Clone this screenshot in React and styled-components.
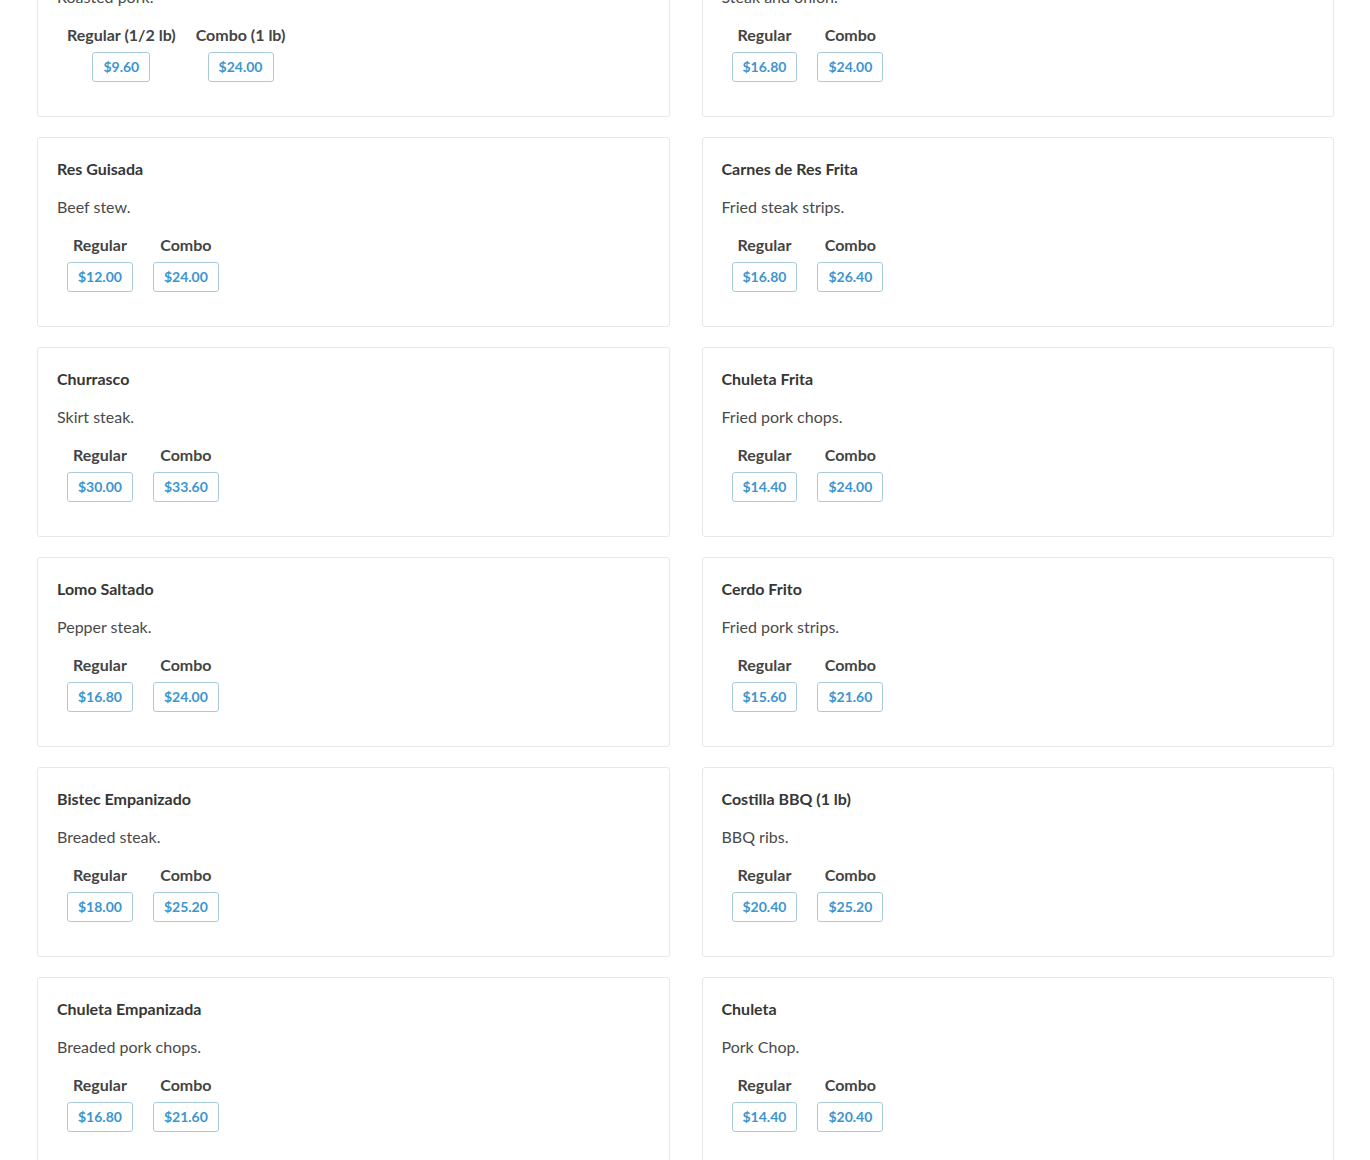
import React from 'react'
import styled, { createGlobalStyle } from 'styled-components'

const items = [
    {
        name: 'Pernil',
        desc: 'Roasted pork.',
        prices: [
            ['Regular (1/2 lb)', '$9.60'],
            ['Combo (1 lb)', '$24.00'],
        ],
    },
    {
        name: 'Bistec Encebollado',
        desc: 'Steak and onion.',
        prices: [
            ['Regular', '$16.80'],
            ['Combo', '$24.00'],
        ],
    },
    { name: 'Res Guisada', desc: 'Beef stew.', prices: [['Regular', '$12.00'], ['Combo', '$24.00']] },
    { name: 'Carnes de Res Frita', desc: 'Fried steak strips.', prices: [['Regular', '$16.80'], ['Combo', '$26.40']] },
    { name: 'Churrasco', desc: 'Skirt steak.', prices: [['Regular', '$30.00'], ['Combo', '$33.60']] },
    { name: 'Chuleta Frita', desc: 'Fried pork chops.', prices: [['Regular', '$14.40'], ['Combo', '$24.00']] },
    { name: 'Lomo Saltado', desc: 'Pepper steak.', prices: [['Regular', '$16.80'], ['Combo', '$24.00']] },
    { name: 'Cerdo Frito', desc: 'Fried pork strips.', prices: [['Regular', '$15.60'], ['Combo', '$21.60']] },
    { name: 'Bistec Empanizado', desc: 'Breaded steak.', prices: [['Regular', '$18.00'], ['Combo', '$25.20']] },
    { name: 'Costilla BBQ (1 lb)', desc: 'BBQ ribs.', prices: [['Regular', '$20.40'], ['Combo', '$25.20']] },
    { name: 'Chuleta Empanizada', desc: 'Breaded pork chops.', prices: [['Regular', '$16.80'], ['Combo', '$21.60']] },
    { name: 'Chuleta', desc: 'Pork Chop.', prices: [['Regular', '$14.40'], ['Combo', '$20.40']] },
]

export default function App() {
    return (
        <>
            <GlobalStyle />
            <Menu>
                {items.map((item) => (
                    <Card key={item.name}>
                        <Title>{item.name}</Title>
                        <Desc>{item.desc}</Desc>
                        <Prices>
                            {item.prices.map(([label, price]) => (
                                <PriceGroup key={label}>
                                    <PriceLabel>{label}</PriceLabel>
                                    <PriceButton>{price}</PriceButton>
                                </PriceGroup>
                            ))}
                        </Prices>
                    </Card>
                ))}
            </Menu>
        </>
    )
}

const GlobalStyle = createGlobalStyle`
    html, body {
        margin: 0;
        padding: 0;
        background: #fff;
        overflow: hidden;
    }
    body {
        font-family: Lato, "Open Sans", "Liberation Sans", sans-serif;
        color: #4a4a4a;
    }
`

const Menu = styled.div`
    display: grid;
    grid-template-columns: 1fr 1fr;
    column-gap: 32px;
    row-gap: 20px;
    width: 1297px;
    margin: -73px 0 0 37px;
`

const Card = styled.div`
    box-sizing: border-box;
    height: 190px;
    padding: 19px 19px 0;
    border: 1px solid #e8e8e8;
    border-radius: 3px;
    background: #fff;
`

const Title = styled.div`
    font-size: 16px;
    line-height: 24px;
    font-weight: 700;
    color: #363636;
    margin-bottom: 14px;
`

const Desc = styled.div`
    font-size: 16px;
    line-height: 24px;
    color: #4a4a4a;
    margin-bottom: 14px;
`

const Prices = styled.div`
    display: flex;
    align-items: flex-start;
`

const PriceGroup = styled.div`
    display: flex;
    flex-direction: column;
    align-items: center;
    margin: 0 10px;
`

const PriceLabel = styled.div`
    font-size: 16px;
    line-height: 24px;
    font-weight: 700;
    color: #444;
    margin-bottom: 5px;
    white-space: nowrap;
`

const PriceButton = styled.div`
    box-sizing: border-box;
    height: 30px;
    line-height: 28px;
    padding: 0 10px;
    font-size: 14px;
    font-weight: 700;
    color: #3d95cf;
    border: 1px solid #a9cadb;
    border-radius: 3px;
    background: #fff;
`
